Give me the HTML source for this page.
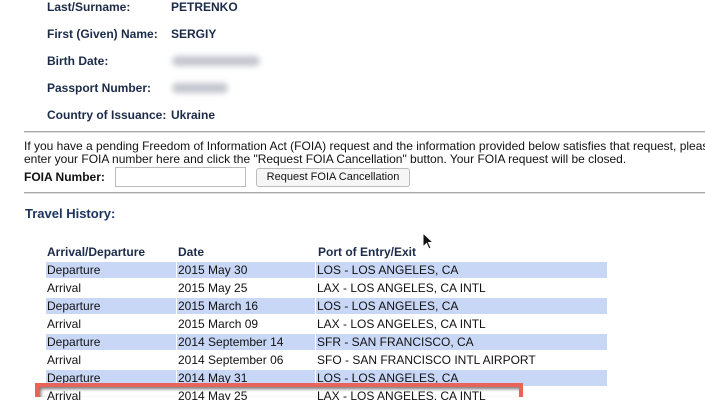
<!DOCTYPE html>
<html style="height:400px;overflow:hidden"><head><style>
body{margin:0;width:705px;height:400px;overflow:hidden;background:#fff;font-family:"Liberation Sans",Arial,sans-serif;position:relative}
.a{position:absolute;white-space:nowrap}
.lb{font-size:12px;font-weight:bold;color:#1c2b48}
.hr{position:absolute;left:24px;right:0;height:1px;background:#a8a8a8;border-bottom:1px solid #e0e0e0}
.t{font-size:12px;color:#111}
.r{position:absolute;left:46px;height:16px;width:560px}
.r div{position:absolute;top:0;height:16px;font-size:12px;color:#111;line-height:16px;padding-left:1px}
.s div{background:#c9d7f7}
.c1{left:0;width:129px}.c2{left:131px;width:137px}.c3{left:270px;width:290px}
.blur{position:absolute;height:10px;background:#c4c6ce;filter:blur(3px);border-radius:5px}
</style></head><body>
<div class="a lb" style="left:47px;top:0">Last/Surname:</div><div class="a lb" style="left:171px;top:0">PETRENKO</div>
<div class="a lb" style="left:47px;top:27px">First (Given) Name:</div><div class="a lb" style="left:171px;top:27px">SERGIY</div>
<div class="a lb" style="left:47px;top:54px">Birth Date:</div><div class="blur" style="left:172px;top:56px;width:88px"></div>
<div class="a lb" style="left:47px;top:81px">Passport Number:</div><div class="blur" style="left:172px;top:83px;width:56px"></div>
<div class="a lb" style="left:47px;top:108px">Country of Issuance:</div><div class="a lb" style="left:171px;top:108px">Ukraine</div>
<div class="hr" style="top:131px"></div>
<div class="a t" style="left:24px;top:139px">If you have a pending Freedom of Information Act (FOIA) request and the information provided below satisfies that request, please</div>
<div class="a t" style="left:24px;top:152px">enter your FOIA number here and click the "Request FOIA Cancellation" button. Your FOIA request will be closed.</div>
<div class="a lb" style="left:24px;top:170px;color:#111">FOIA Number:</div>
<div class="a" style="left:115px;top:167px;width:129px;height:18px;border:1px solid #bbb"></div>
<div class="a" style="left:256px;top:168px;width:152px;height:17px;border:1px solid #bbb;border-radius:3px;background:#f6f6f6;font-size:11px;line-height:17px;text-align:center;color:#111">Request FOIA Cancellation</div>
<div class="hr" style="top:192px"></div>
<div class="a" style="left:25px;top:206px;font-size:13px;font-weight:bold;color:#1c3560">Travel History:</div>
<div class="a lb" style="left:47px;top:245px">Arrival/Departure</div>
<div class="a lb" style="left:178px;top:245px">Date</div>
<div class="a lb" style="left:318px;top:245px">Port of Entry/Exit</div>
<div class="r s" style="top:262px"><div class="c1">Departure</div><div class="c2">2015 May 30</div><div class="c3">LOS - LOS ANGELES, CA</div></div>
<div class="r" style="top:280px"><div class="c1">Arrival</div><div class="c2">2015 May 25</div><div class="c3">LAX - LOS ANGELES, CA INTL</div></div>
<div class="r s" style="top:298px"><div class="c1">Departure</div><div class="c2">2015 March 16</div><div class="c3">LOS - LOS ANGELES, CA</div></div>
<div class="r" style="top:316px"><div class="c1">Arrival</div><div class="c2">2015 March 09</div><div class="c3">LAX - LOS ANGELES, CA INTL</div></div>
<div class="r s" style="top:334px"><div class="c1">Departure</div><div class="c2">2014 September 14</div><div class="c3">SFR - SAN FRANCISCO, CA</div></div>
<div class="r" style="top:352px"><div class="c1">Arrival</div><div class="c2">2014 September 06</div><div class="c3">SFO - SAN FRANCISCO INTL AIRPORT</div></div>
<div class="r s" style="top:370px"><div class="c1">Departure</div><div class="c2">2014 May 31</div><div class="c3">LOS - LOS ANGELES, CA</div></div>
<div class="r" style="top:388px"><div class="c1">Arrival</div><div class="c2">2014 May 25</div><div class="c3">LAX - LOS ANGELES, CA INTL</div></div>
<div class="a" style="left:35px;top:383px;width:480px;height:10px;border:4px solid #e8645a;border-bottom:none;box-shadow:inset 2px 2px 3px #777"></div>
<svg class="a" style="left:422px;top:232px" width="14" height="20" viewBox="0 0 14 20"><path d="M1 1 L1 15 L4.5 11.5 L7 17 L9 16 L6.5 10.5 L11 10.5 Z" fill="#111" stroke="#fff" stroke-width="1"/></svg>
</body></html>
